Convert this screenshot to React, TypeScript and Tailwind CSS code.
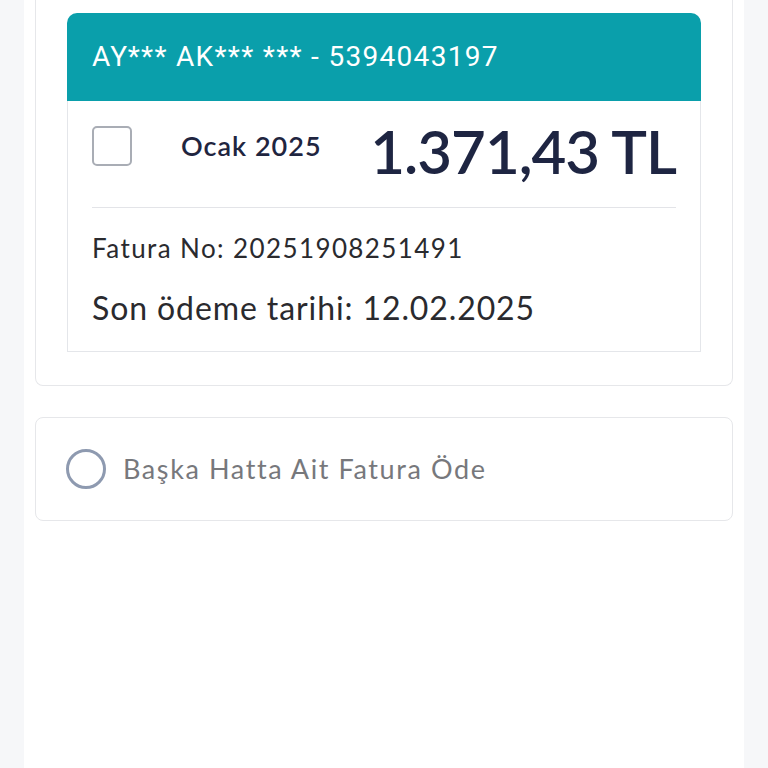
import React from 'react'

function InvoiceCard() {
  return (
    <div className="flex flex-col">
      <div className="flex h-[88px] items-center rounded-t-[10px] bg-[#0a9fab] px-[25px]">
        <span className="font-['Roboto',sans-serif] text-[28px] tracking-[1.3px] text-white">AY*** AK*** *** - 5394043197</span>
      </div>
      <div className="flex h-[251px] flex-col border-x border-b border-[#e4e6ea] bg-white px-[24px]">
        <div className="flex h-[90px] items-center">
          <div className="h-[40px] w-[40px] shrink-0 rounded-[5px] border-2 border-[#a9adb5] bg-white" />
          <span className="ml-[49px] text-[27px] font-semibold tracking-[1px] text-[#1f2540]">Ocak 2025</span>
          <span className="ml-auto mt-[10px] text-[60px] font-semibold tracking-[-1px] text-[#1e2542]">1.371,43 TL</span>
        </div>
        <div className="mt-[16px] h-px bg-[#e3e4e8]" />
        <div className="mt-[24px] text-[26px] leading-[32px] tracking-[1.4px] text-[#2a2a2e]">Fatura No: 20251908251491</div>
        <div className="mt-[24px] text-[32px] leading-[40px] tracking-[0.9px] text-[#2a2a2e]">Son ödeme tarihi: 12.02.2025</div>
      </div>
    </div>
  )
}

export default function App() {
  return (
    <div className="flex min-h-screen w-full bg-[#f6f7f9] px-[24px] font-['Lato',sans-serif]">
      <div className="flex min-h-[768px] flex-1 flex-col gap-[31px] bg-white px-[11px]">
        <div className="rounded-b-[8px] border-x border-b border-[#e6e7ea] px-[31px] pb-[33px] pt-[13px]">
          <InvoiceCard />
        </div>
        <div className="flex h-[104px] items-center rounded-[8px] border border-[#e6e7ea] pl-[30px]">
          <div className="h-[40px] w-[40px] shrink-0 rounded-full border-[3px] border-[#8e9ab0]" />
          <span className="ml-[17px] text-[27px] tracking-[1.6px] text-[#77787c]">Başka Hatta Ait Fatura Öde</span>
        </div>
      </div>
    </div>
  )
}
